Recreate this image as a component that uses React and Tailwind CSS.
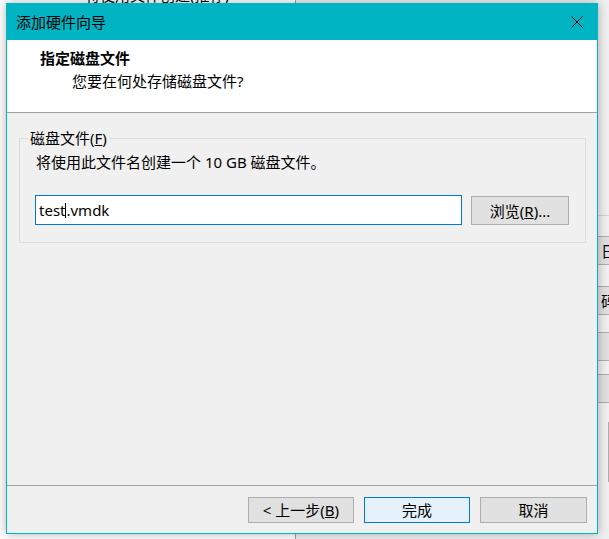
import React from 'react';

const font = { fontFamily: '"Noto Sans", "Noto Sans CJK SC", sans-serif' };

const Btn = ({ children, primary, className = '' }) => (
  <div
    className={`flex items-center justify-center h-[26px] w-[106px] border text-[15px] leading-[20px] text-black ${
      primary ? 'bg-[#e5f1fb] border-[#0078d7]' : 'bg-[#e1e1e1] border-[#adadad]'
    } ${className}`}
  >
    {children}
  </div>
);

const SideButton = ({ label }) => (
  <div className="h-[29px] bg-[#e1e1e1] border-y border-[#adadad] flex items-center pl-[41px] text-[15px] leading-[20px] text-black">
    {label}
  </div>
);

export default function App() {
  return (
    <div className="relative w-[609px] h-[539px] overflow-hidden bg-[#f0f0f0]" style={font}>
      {/* window behind the dialog */}
      <div className="flex h-full">
        <div className="w-[296px] h-full bg-white border-r border-[#a0a0a0] overflow-hidden">
          <div className="-mt-[15px] pl-[85px] text-[15px] leading-[20px] text-black whitespace-nowrap">将使用文件创建(推荐)</div>
        </div>
        <div className="flex-1" />
        <div className="w-[49px] h-full overflow-hidden bg-[#f0f0f0]">
          <div className="h-[215px]" />
          <div className="h-[21px] border-t border-[#d6d6d6]" />
          <SideButton label="日" />
          <div className="h-[21px]" />
          <SideButton label="码" />
          <div className="h-[17px]" />
          <SideButton label="" />
          <div className="h-[13px]" />
          <SideButton label="" />
          <div className="h-[19px]" />
          <div className="ml-[48px] h-[60px] bg-white border-l border-[#adadad]" />
        </div>
      </div>

      {/* dialog */}
      <div className="absolute left-[6px] top-[3px] w-[592px] h-[531px] border border-[#00b4c3] bg-[#f0f0f0] flex flex-col shadow-[0_0_10px_rgba(0,0,0,0.3)]">
        <div className="h-[36px] bg-[#00b4c3] flex items-center justify-between pl-[9px] pr-[14px]">
          <span className="text-[15px] leading-[20px] text-black">添加硬件向导</span>
          <svg width="12" height="12" viewBox="0 0 12 12" className="mt-[-1px]">
            <path d="M0.5 0.5 L11.5 11.5 M11.5 0.5 L0.5 11.5" stroke="#000" strokeWidth="1" fill="none" />
          </svg>
        </div>

        <div className="h-[73px] bg-white border-b border-[#a0a0a0] pt-[8px]">
          <div className="pl-[33px] text-[15px] leading-[20px] font-bold text-black">指定磁盘文件</div>
          <div className="pl-[65px] mt-[3px] text-[15px] leading-[20px] text-black">您要在何处存储磁盘文件?</div>
        </div>

        <div className="flex-1 pt-[25px]">
          <div className="relative ml-[12px] mr-[11px] border border-[#dcdcdc] pt-[13px] pl-[15px] pr-[15px] pb-[17px]">
            <span className="absolute -top-[11px] left-[8px] px-[2px] bg-[#f0f0f0] text-[15px] leading-[20px] text-black">
              磁盘文件(<span className="underline">F</span>)
            </span>
            <div className="ml-[1px] text-[15px] leading-[20px] text-black">将使用此文件名创建一个 10 GB 磁盘文件。</div>
            <div className="mt-[23px] flex items-start">
              <div className="w-[427px] h-[30px] bg-white border border-[#0078d7] flex items-center pl-[3px] text-[15px] leading-[20px] text-black">
                test<span className="inline-block w-px h-[15px] bg-black" />.vmdk
              </div>
              <div className="ml-[9px] mt-[1px] w-[98px] h-[29px] bg-[#e1e1e1] border border-[#adadad] flex items-center justify-center text-[15px] leading-[20px] text-black">
                浏览(<span className="underline">R</span>)...
              </div>
            </div>
          </div>
        </div>

        <div className="h-[48px] border-t border-[#a0a0a0] pt-[11px] pr-[10px] flex justify-end gap-[10px]">
          <Btn>&lt; 上一步(<span className="underline">B</span>)</Btn>
          <Btn primary>完成</Btn>
          <Btn className="w-[107px]">取消</Btn>
        </div>
      </div>
    </div>
  );
}
